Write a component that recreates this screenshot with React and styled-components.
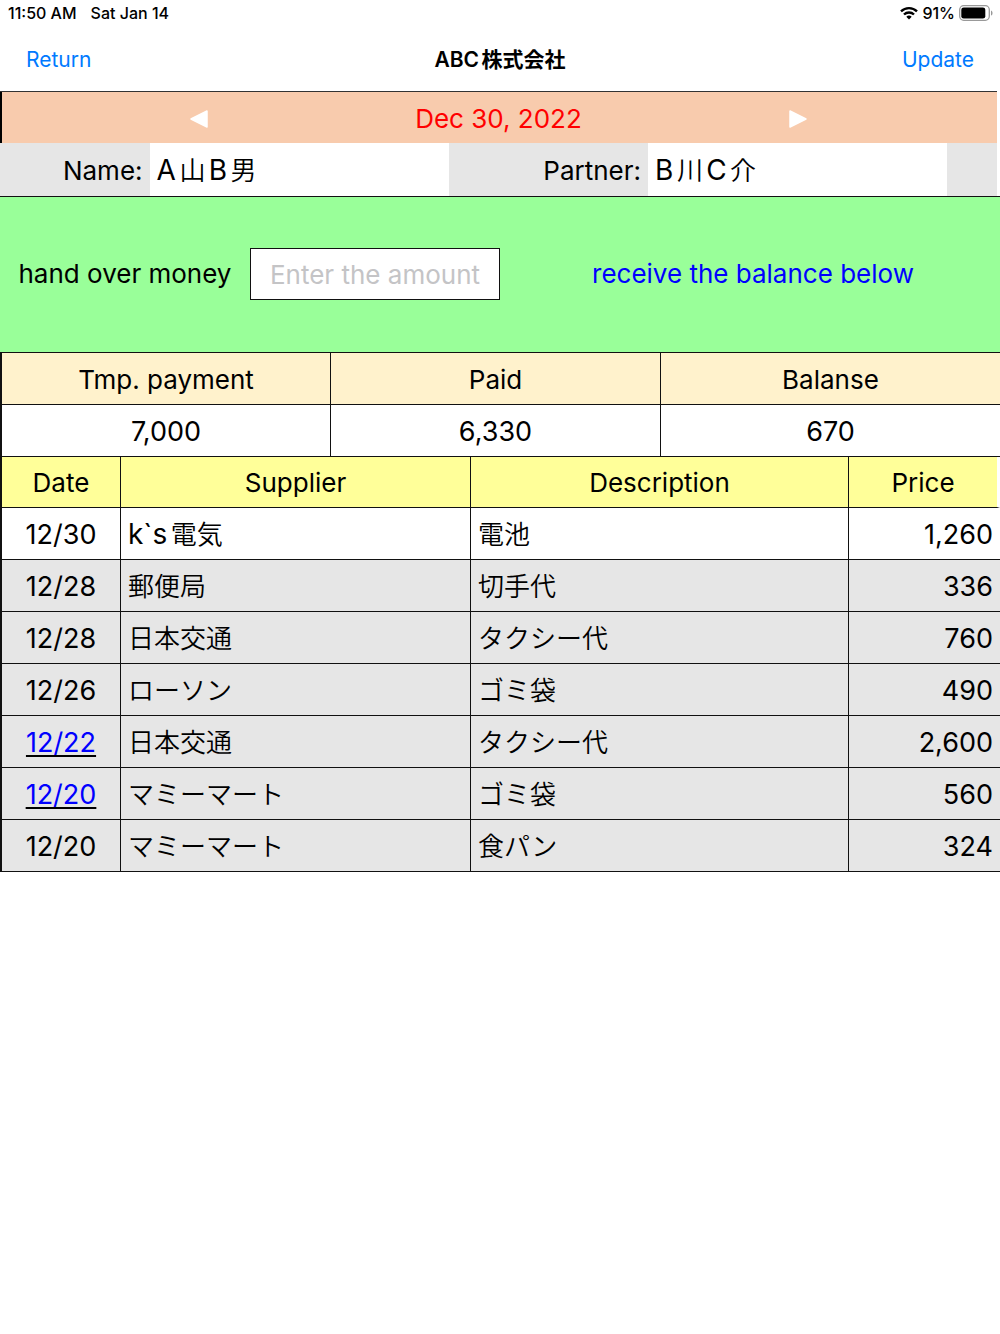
import React, { useState } from "react";
import styled, { createGlobalStyle, css } from "styled-components";

const GlobalStyle = createGlobalStyle`
  *, *::before, *::after { box-sizing: border-box; }
  body {
    margin: 0;
    background: #fff;
    color: #000;
    font-family: Inter, "Noto Sans CJK JP", sans-serif;
    font-size: 26px;
    line-height: 32px;
    text-autospace: normal;
  }
`;

const LINE = "1px solid #111";

const plainButton = css`
  border: 0;
  padding: 0;
  background: none;
  font: inherit;
  cursor: pointer;
`;

const StatusBar = styled.header`
  display: flex;
  justify-content: space-between;
  align-items: center;
  height: 26px;
  padding: 0 7px 0 8px;
  font-size: 16px;
  font-weight: 500;
  line-height: 20px;
`;

const StatusGroup = styled.div`
  display: flex;
  align-items: center;
  gap: ${(p) => p.$gap}px;
`;

const NavBar = styled.nav`
  display: grid;
  grid-template-columns: 1fr auto 1fr;
  align-items: center;
  height: 65px;
  padding: 2px 26px 0;
  font-size: 21px;
`;

const NavButton = styled.button`
  ${plainButton}
  justify-self: ${(p) => p.$side};
  color: #007aff;
`;

const Title = styled.h1`
  margin: 0;
  font-size: 21px;
  font-weight: 600;
  line-height: 32px;
`;

const DateBar = styled.section`
  display: grid;
  grid-template-columns: 2fr 1fr 2fr;
  align-items: stretch;
  height: 52px;
  margin-right: 3px;
  padding-top: 2px;
  background: #f8cbad;
  border-top: 1px solid #333;
  box-shadow: inset 2px 0 #000;
`;

const Step = styled.button`
  ${plainButton}
  display: flex;
  align-items: center;
  justify-content: center;
`;

const CurrentDate = styled.time`
  align-self: center;
  color: #f00;
  text-align: center;
  white-space: nowrap;
`;

const People = styled.dl`
  display: grid;
  grid-template-columns: 15fr 30fr 20fr 30fr 5fr;
  height: 53px;
  margin: 0 3px 0 0;
  background: #e6e6e6;
  line-height: 50px;
`;

const PersonLabel = styled.dt`
  padding: 3px 7px 0 0;
  text-align: right;
`;

const PersonName = styled.dd`
  margin: 0;
  padding: 3px 0 0 7px;
  background: #fff;
  font-weight: 350;
`;

const Latin = styled.span`
  font-size: 28px;
  font-weight: 400;
  line-height: 1;
`;

const Transfer = styled.form`
  display: grid;
  grid-template-columns: 1fr 1fr 2fr;
  align-items: center;
  height: 156px;
  padding-bottom: 1px;
  background: #9f9;
  border-top: ${LINE};
  text-align: center;
  white-space: nowrap;
`;

const AmountInput = styled.input`
  width: 100%;
  min-width: 0;
  height: 52px;
  padding: 0;
  border: 1px solid #111;
  border-radius: 0;
  background: #fff;
  font: inherit;
  text-align: center;
  outline: none;
  &::placeholder { color: #c4c4c6; opacity: 1; }
`;

const Receive = styled.output`
  padding-left: 6px;
  color: #00f;
`;

const Table = styled.table`
  width: 100%;
  table-layout: fixed;
  border-collapse: separate;
  border-spacing: 0;
`;

const Col = styled.col`
  width: ${(p) => p.$width};
`;

const HeadCell = styled.th`
  height: ${(p) => (p.$topLine ? 52 : 51)}px;
  padding: 2px 0 0;
  border-top: ${(p) => (p.$topLine ? LINE : "0")};
  border-bottom: ${(p) => (p.$topLine ? "0" : LINE)};
  border-left: ${LINE};
  background: ${(p) => p.$fill};
  font-weight: 400;
  &:first-child { border-left-width: 2px; }
  ${(p) => p.$inset && css`border-right: 3px solid #fff;`}
`;

const Cell = styled.td`
  height: 52px;
  padding: 2px 7px 0;
  border-left: ${LINE};
  border-bottom: ${LINE};
  background: ${(p) => (p.$shaded ? "#e6e6e6" : "#fff")};
  font-size: 27px;
  text-align: ${(p) => p.$align || "center"};
  &:first-child { border-left-width: 2px; }
`;

const SumCell = styled(Cell)`
  height: 53px;
  border-top: ${LINE};
`;

const JapaneseCell = styled(Cell)`
  font-size: 26px;
  font-weight: 350;
  text-align: left;
`;

const DateLink = styled.a`
  color: #00f;
  text-decoration: underline #000 2px;
  text-underline-offset: 3px;
`;

function MixedText({ children }) {
  return children
    .split(/([A-Za-z`]+)/)
    .filter(Boolean)
    .map((run, i) => (/^[A-Za-z`]/.test(run) ? <Latin key={i}>{run}</Latin> : run));
}

function WifiIcon() {
  return (
    <svg width="18" height="14" viewBox="0 0 18 14" aria-hidden="true">
      <g fill="none" stroke="#000" strokeWidth="2.4">
        <path d="M1 5.3a11.6 11.6 0 0 1 16 0" />
        <path d="M4 8.5a7.2 7.2 0 0 1 10 0" />
      </g>
      <path d="M6.3 10.7a4 4 0 0 1 5.4 0L9 13.5z" fill="#000" />
    </svg>
  );
}

function BatteryIcon() {
  return (
    <svg width="34" height="16" viewBox="0 0 34 16" aria-hidden="true">
      <rect x="0.7" y="0.7" width="29.6" height="14.6" rx="4" fill="none" stroke="#999" strokeWidth="1.3" />
      <rect x="2.3" y="2.4" width="24" height="11.2" rx="2.4" fill="#000" />
      <path d="M32 5.4c2 .9 2 4.3 0 5.2z" fill="#999" />
    </svg>
  );
}

function Triangle({ direction }) {
  const d = direction === "left" ? "M17 1v16L1 9z" : "M1 1v16l16-8z";
  return (
    <svg width="18" height="18" viewBox="0 0 18 18" aria-hidden="true">
      <path d={d} fill="#fff" stroke="#fff" strokeWidth="1.5" strokeLinejoin="round" />
    </svg>
  );
}

const summary = [
  { label: "Tmp. payment", value: "7,000" },
  { label: "Paid", value: "6,330" },
  { label: "Balanse", value: "670" },
];

const entries = [
  { date: "12/30", supplier: "k`s電気", description: "電池", price: "1,260", open: true },
  { date: "12/28", supplier: "郵便局", description: "切手代", price: "336" },
  { date: "12/28", supplier: "日本交通", description: "タクシー代", price: "760" },
  { date: "12/26", supplier: "ローソン", description: "ゴミ袋", price: "490" },
  { date: "12/22", supplier: "日本交通", description: "タクシー代", price: "2,600", linked: true },
  { date: "12/20", supplier: "マミーマート", description: "ゴミ袋", price: "560", linked: true },
  { date: "12/20", supplier: "マミーマート", description: "食パン", price: "324" },
];

export default function App() {
  const [amount, setAmount] = useState("");
  return (
    <>
      <GlobalStyle />
      <StatusBar>
        <StatusGroup $gap={14}>
          <span>11:50 AM</span>
          <span>Sat Jan 14</span>
        </StatusGroup>
        <StatusGroup $gap={4}>
          <WifiIcon />
          <span>91%</span>
          <BatteryIcon />
        </StatusGroup>
      </StatusBar>
      <NavBar>
        <NavButton type="button" $side="start">Return</NavButton>
        <Title>ABC株式会社</Title>
        <NavButton type="button" $side="end">Update</NavButton>
      </NavBar>
      <main>
        <DateBar>
          <Step type="button" aria-label="Previous day"><Triangle direction="left" /></Step>
          <CurrentDate dateTime="2022-12-30">Dec 30, 2022</CurrentDate>
          <Step type="button" aria-label="Next day"><Triangle direction="right" /></Step>
        </DateBar>
        <People>
          <PersonLabel>Name:</PersonLabel>
          <PersonName><MixedText>A山B男</MixedText></PersonName>
          <PersonLabel>Partner:</PersonLabel>
          <PersonName><MixedText>B川C介</MixedText></PersonName>
        </People>
        <Transfer onSubmit={(e) => e.preventDefault()}>
          <label htmlFor="amount">hand over money</label>
          <AmountInput
            id="amount"
            inputMode="numeric"
            placeholder="Enter the amount"
            value={amount}
            onChange={(e) => setAmount(e.target.value)}
          />
          <Receive htmlFor="amount">receive the balance below</Receive>
        </Transfer>
        <Table>
          <colgroup>
            <Col $width="33%" />
            <Col $width="33%" />
            <Col $width="34%" />
          </colgroup>
          <thead>
            <tr>
              {summary.map((s) => (
                <HeadCell key={s.label} scope="col" $fill="#fff2cc" $topLine>{s.label}</HeadCell>
              ))}
            </tr>
          </thead>
          <tbody>
            <tr>
              {summary.map((s) => (
                <SumCell key={s.label}>{s.value}</SumCell>
              ))}
            </tr>
          </tbody>
        </Table>
        <Table>
          <colgroup>
            <Col $width="12%" />
            <Col $width="35%" />
            <Col />
            <Col $width="152px" />
          </colgroup>
          <thead>
            <tr>
              <HeadCell scope="col" $fill="#ff9">Date</HeadCell>
              <HeadCell scope="col" $fill="#ff9">Supplier</HeadCell>
              <HeadCell scope="col" $fill="#ff9">Description</HeadCell>
              <HeadCell scope="col" $fill="#ff9" $inset>Price</HeadCell>
            </tr>
          </thead>
          <tbody>
            {entries.map((e, i) => (
              <tr key={i}>
                <Cell $shaded={!e.open}>
                  {e.linked ? <DateLink href="#receipt">{e.date}</DateLink> : e.date}
                </Cell>
                <JapaneseCell $shaded={!e.open}><MixedText>{e.supplier}</MixedText></JapaneseCell>
                <JapaneseCell $shaded={!e.open}>{e.description}</JapaneseCell>
                <Cell $shaded={!e.open} $align="right">{e.price}</Cell>
              </tr>
            ))}
          </tbody>
        </Table>
      </main>
    </>
  );
}
